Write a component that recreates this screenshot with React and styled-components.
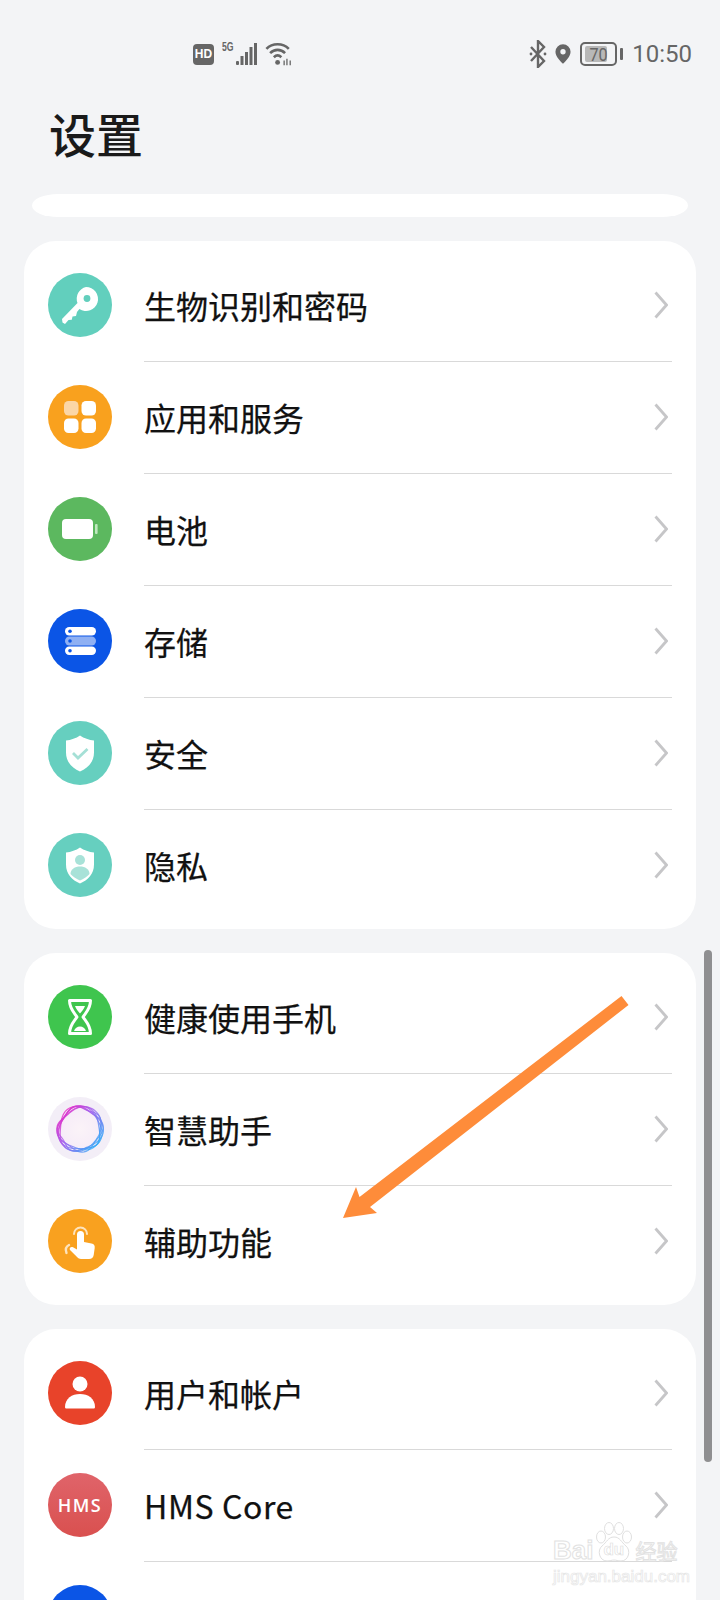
import React from 'react';
import styled, { createGlobalStyle } from 'styled-components';

const GlobalStyle = createGlobalStyle`
  html, body { margin: 0; padding: 0; background: #f3f4f6; }
  body { font-family: "Noto Sans CJK SC", "Noto Sans", sans-serif; }
`;

const Page = styled.div`
  position: relative;
  width: 720px;
  height: 1600px;
  overflow: hidden;
  background: #f3f4f6;
  color: #1a1a1a;
`;

const StatusBar = styled.div`
  display: flex;
  align-items: center;
  justify-content: space-between;
  height: 28px;
  padding: 40px 28px 0 193px;
  color: #666;
`;

const StatusGroup = styled.div`
  display: flex;
  align-items: center;
  gap: 8px;
  & svg { display: block; flex: none; }
`;

const HdBadge = styled.span`
  display: flex;
  align-items: center;
  justify-content: center;
  width: 21px;
  height: 21px;
  border-radius: 4px;
  background: #666;
  color: #fff;
  font: 700 12px/1 "Liberation Sans", sans-serif;
`;

const NetLabel = styled.span`
  align-self: flex-start;
  width: 13px;
  margin-right: -7px;
  font: 700 12px/12px "Liberation Sans", sans-serif;
  transform: scaleX(0.72);
  transform-origin: left top;
  white-space: nowrap;
`;

const BatteryCase = styled.div`
  position: relative;
  box-sizing: border-box;
  width: 37px;
  height: 24px;
  margin-left: 1px;
  border: 2px solid #666;
  border-radius: 5px;
  &::after {
    content: '';
    position: absolute;
    right: -8px;
    top: 4px;
    width: 3px;
    height: 12px;
    border-radius: 1px;
    background: #666;
  }
`;

const BatteryFill = styled.div`
  position: absolute;
  left: 3px;
  top: 2px;
  bottom: 2px;
  width: 22px;
  border-radius: 2px;
  background: #b8b8b8;
`;

const BatteryLabel = styled.span`
  position: absolute;
  inset: 0;
  display: flex;
  align-items: center;
  justify-content: center;
  font: 400 19px/1 Roboto, sans-serif;
  transform: scaleX(0.85);
`;

const Clock = styled.span`
  margin-left: 7px;
  font: 400 24px/28px Roboto, sans-serif;
`;

const Title = styled.h1`
  margin: 33px 0 0 49px;
  font-size: 47px;
  line-height: 64px;
  font-weight: 500;
  color: #1a1a1a;
`;

const ClippedCard = styled.div`
  height: 23px;
  margin: 29px 32px 24px;
  background: #fff;
  border-radius: 26px / 50%;
`;

const Cards = styled.div`
  display: flex;
  flex-direction: column;
  gap: 24px;
  padding: 0 24px;
`;

const Card = styled.div`
  padding: 8px 0;
  background: #fff;
  border-radius: 32px;
`;

const Row = styled.div`
  position: relative;
  display: flex;
  align-items: center;
  height: 112px;
  padding: 0 28px 0 24px;
  &:not(:last-child)::after {
    content: '';
    position: absolute;
    left: 120px;
    right: 24px;
    bottom: -1px;
    height: 1px;
    background: #d9d9d9;
  }
`;

const IconCircle = styled.div`
  display: flex;
  align-items: center;
  justify-content: center;
  flex: none;
  width: 64px;
  height: 64px;
  border-radius: 50%;
  background: ${(p) => p.$bg};
  & svg { display: block; }
`;

const HmsText = styled.span`
  color: #fff;
  font: 600 18px/1 "Open Sans", sans-serif;
  letter-spacing: 1.500px;
`;

const Label = styled.span`
  flex: 1;
  margin-left: 32px;
  font-size: 32px;
  line-height: 44px;
  font-weight: 400;
  color: #111;
  -webkit-text-stroke: 0.25px #111;
  letter-spacing: ${(p) => (p.$latin ? '0.6px' : '0')};
`;

const Scrollbar = styled.div`
  position: absolute;
  left: 704px;
  top: 950px;
  width: 8px;
  height: 512px;
  border-radius: 4px;
  background: #8f8f91;
`;

const ArrowLayer = styled.svg`
  position: absolute;
  left: 0;
  top: 0;
  pointer-events: none;
`;

const Watermark = styled.div`
  position: absolute;
  left: 553px;
  top: 1522px;
  width: 130px;
  pointer-events: none;
  color: #fff;
  -webkit-text-stroke: 1px #e2e2e2;
`;

const WatermarkBrand = styled.div`
  display: flex;
  align-items: flex-end;
  height: 40px;
  white-space: nowrap;
`;

const WatermarkLatin = styled.span`
  font: 700 26px/24px "Liberation Sans", sans-serif;
`;

const WatermarkCn = styled.span`
  font: 400 21px/24px "Noto Sans CJK SC", sans-serif;
`;

const WatermarkPaw = styled.div`
  position: relative;
  width: 42px;
  height: 40px;
`;

const WatermarkDu = styled.span`
  position: absolute;
  left: 10px;
  top: 19px;
  font: 700 17px/18px "Liberation Sans", sans-serif;
  -webkit-text-stroke: 0.6px #dcdcdc;
`;

const WatermarkUrl = styled.div`
  margin-top: 5px;
  font: 400 17px/20px "Liberation Sans", sans-serif;
  -webkit-text-stroke: 0.7px #e6e6e6;
  white-space: nowrap;
`;

const Chevron = () => (
  <svg width="14" height="28" viewBox="0 0 14 28" fill="none">
    <path d="M1.500 1.500 L12.500 14 L1.500 26.500" stroke="#c6c6c8" strokeWidth="2.800" />
  </svg>
);

const KeyGlyph = () => (
  <svg width="64" height="64" viewBox="0 0 64 64">
    <path fill="#fff" d="M38 14a12 12 0 1 1-6.600 22L29 39l-1 4-3.500.5-.7 3.200-3.300.3L17 51l-2.500-1.500-.5-3.500 15.500-16A12 12 0 0 1 38 14z" />
    <circle cx="39" cy="25.500" r="3.400" fill="#62cfbd" />
  </svg>
);

const AppsGlyph = () => (
  <svg width="64" height="64" viewBox="0 0 64 64">
    <rect x="16" y="16" width="14.500" height="14.500" rx="4.500" fill="#fbd6a6" />
    <rect x="33.500" y="16" width="14.500" height="14.500" rx="4.500" fill="#fff" />
    <rect x="16" y="33.500" width="14.500" height="14.500" rx="4.500" fill="#fff" />
    <rect x="33.500" y="33.500" width="14.500" height="14.500" rx="4.500" fill="#fff" />
  </svg>
);

const BatteryGlyph = () => (
  <svg width="64" height="64" viewBox="0 0 64 64">
    <rect x="14" y="22" width="31" height="20" rx="4" fill="#fff" />
    <rect x="47" y="27" width="2.600" height="10" rx="1" fill="#bfe8bf" />
  </svg>
);

const StorageGlyph = () => (
  <svg width="64" height="64" viewBox="0 0 64 64">
    <rect x="17" y="18" width="31" height="8.500" rx="4.200" fill="#fff" />
    <rect x="17" y="27.500" width="31" height="9" rx="4.500" fill="#8fb0f3" />
    <rect x="17" y="37.500" width="31" height="8.500" rx="4.200" fill="#fff" />
    <circle cx="22" cy="22.200" r="1.800" fill="#0b55e6" />
    <circle cx="22" cy="32" r="1.800" fill="#0b55e6" />
    <circle cx="22" cy="41.800" r="1.800" fill="#0b55e6" />
  </svg>
);

const shieldPath = 'M32 14.500c4 2.800 9 4.500 14 5v12c0 9.500-6 15.500-14 19-8-3.500-14-9.500-14-19v-12c5-.5 10-2.200 14-5z';

const ShieldCheckGlyph = () => (
  <svg width="64" height="64" viewBox="0 0 64 64">
    <path fill="#fff" d={shieldPath} />
    <path d="M25 32l5 5 9.500-9" fill="none" stroke="#a5e0d6" strokeWidth="2.800" />
  </svg>
);

const ShieldPersonGlyph = () => (
  <svg width="64" height="64" viewBox="0 0 64 64">
    <path fill="#fff" d={shieldPath} />
    <circle cx="32" cy="27" r="5" fill="#a8e2d8" />
    <path d="M22.500 41c0-5 4.500-7.500 9.500-7.500s9.500 2.500 9.500 7.500c-2.500 3-6 5-9.500 6.500-3.500-1.500-7-3.500-9.500-6.500z" fill="#a8e2d8" />
  </svg>
);

const HourglassGlyph = () => (
  <svg width="64" height="64" viewBox="0 0 64 64" fill="none">
    <path d="M21.500 15.500h21c0 8-4.500 12-7.500 16.500 3 4.500 7.500 8.500 7.500 16.500h-21c0-8 4.500-12 7.500-16.500-3-4.500-7.500-8.500-7.500-16.500z" stroke="#fff" strokeWidth="3" strokeLinejoin="round" />
    <path d="M27 21h10c-1 3-3 5-5 7.500-2-2.500-4-4.500-5-7.500z" fill="#fff" />
    <path d="M26 46c1-3 3.200-4.500 6-4.500s5 1.500 6 4.500z" fill="#fff" />
  </svg>
);

const ringPath = (amp, lobes, phase, radius) => {
  const pts = [];
  for (let i = 0; i < 72; i++) {
    const a = (i / 72) * Math.PI * 2;
    const r = radius + amp * Math.sin(lobes * a + phase);
    pts.push(`${(32 + r * Math.cos(a)).toFixed(2)} ${(32 + r * Math.sin(a)).toFixed(2)}`);
  }
  return `M${pts.join('L')}Z`;
};

const rings = [
  [1.800, 3, 0, 21.500],
  [2, 3, 1.300, 21.500],
  [1.800, 4, 2.200, 21.500],
  [2.200, 2, 3.400, 21.500],
  [1.600, 5, 4.400, 21.500],
  [2, 3, 5.200, 21],
];

const AssistantGlyph = () => (
  <svg width="64" height="64" viewBox="0 0 64 64" fill="none">
    <defs>
      <linearGradient id="ring" x1="0.100" y1="0.150" x2="0.900" y2="0.850">
        <stop offset="0" stopColor="#e52fc8" />
        <stop offset="0.450" stopColor="#a060ee" />
        <stop offset="1" stopColor="#35a8f7" />
      </linearGradient>
      <radialGradient id="ringFill" cx="0.500" cy="0.500" r="0.500">
        <stop offset="0" stopColor="#fbf3f8" />
        <stop offset="1" stopColor="#f6ecf8" />
      </radialGradient>
    </defs>
    <circle cx="32" cy="32" r="21" fill="url(#ringFill)" />
    {rings.map(([amp, lobes, phase, radius]) => (
      <path key={phase} d={ringPath(amp, lobes, phase, radius)} stroke="url(#ring)" strokeWidth="1.200" opacity="0.800" />
    ))}
  </svg>
);

const TouchGlyph = () => (
  <svg width="64" height="64" viewBox="0 0 64 64" fill="none">
    <path d="M26 25a6.500 6.500 0 1 1 13 0" stroke="#fde3bd" strokeWidth="2" strokeLinecap="round" />
    <path d="M21 36c-3 1.500-4 4-2.500 8" stroke="#fde3bd" strokeWidth="2.400" strokeLinecap="round" />
    <path fill="#fff" d="M29 25.500a3.500 3.500 0 0 1 7 0V33l7.500 1.500c2.500.5 3.500 2 3.200 4.500l-1 7c-.4 2.500-2 4-4.700 4H33c-1.500 0-2.700-.6-3.700-1.700L22 41c-1.200-1.500 .8-4 3-2.800l4 2.300z" />
  </svg>
);

const UserGlyph = () => (
  <svg width="64" height="64" viewBox="0 0 64 64">
    <circle cx="32" cy="23" r="7.500" fill="#fff" />
    <path fill="#fff" d="M17 46c0-8.500 7-13 15-13s15 4.500 15 13c0 1-.7 1.500-1.500 1.500h-27c-.8 0-1.500-.5-1.500-1.500z" />
  </svg>
);

const BlueGlyph = () => (
  <svg width="64" height="64" viewBox="0 0 64 64">
    <circle cx="32" cy="24" r="8" fill="#fff" opacity="0.850" />
  </svg>
);

const sections = [
  [
    { label: '生物识别和密码', bg: '#62cfbd', glyph: <KeyGlyph /> },
    { label: '应用和服务', bg: '#f9a11e', glyph: <AppsGlyph /> },
    { label: '电池', bg: '#5cb85f', glyph: <BatteryGlyph /> },
    { label: '存储', bg: '#0b55e6', glyph: <StorageGlyph /> },
    { label: '安全', bg: '#66cfbf', glyph: <ShieldCheckGlyph /> },
    { label: '隐私', bg: '#66cfbf', glyph: <ShieldPersonGlyph /> },
  ],
  [
    { label: '健康使用手机', bg: '#3fc54e', glyph: <HourglassGlyph /> },
    { label: '智慧助手', bg: '#f3eef7', glyph: <AssistantGlyph /> },
    { label: '辅助功能', bg: '#f9a11f', glyph: <TouchGlyph /> },
  ],
  [
    { label: '用户和帐户', bg: '#e8432a', glyph: <UserGlyph /> },
    { label: 'HMS Core', latin: true, bg: 'linear-gradient(180deg, #e0646a, #d9504f)', glyph: <HmsText>HMS</HmsText> },
    { label: '', bg: '#0b55e6', glyph: <BlueGlyph /> },
  ],
];

export default function App() {
  return (
    <Page>
      <GlobalStyle />
      <StatusBar>
        <StatusGroup>
          <HdBadge>HD</HdBadge>
          <NetLabel>5G</NetLabel>
          <svg width="21" height="24" viewBox="0 0 21 24" fill="#666">
            <rect x="0" y="19" width="3" height="4" rx="1" />
            <rect x="4.500" y="14" width="3" height="9" />
            <rect x="9" y="10" width="3" height="13" />
            <rect x="13.500" y="5" width="3" height="18" />
            <rect x="18" y="1" width="3" height="22" />
          </svg>
          <svg width="28" height="26" viewBox="0 0 30 26" fill="none" stroke="#666" strokeWidth="2.800">
            <path d="M1.500 7.500C8 1 19 1 25.500 7.500" />
            <path d="M5.500 12c4.500-4.500 11.500-4.500 16 0" />
            <path d="M9.500 16.500c2.500-2.500 5.500-2.500 8 0" />
            <circle cx="13.500" cy="22" r="2.600" fill="#666" stroke="none" />
            <path d="M20.500 20v5M23.500 18v7M27 20v5" strokeWidth="1.400" />
          </svg>
        </StatusGroup>
        <StatusGroup>
          <svg width="18" height="28" viewBox="0 0 18 28" fill="none" stroke="#666" strokeWidth="2.400">
            <path d="M2 7l13 14-6 6V1l6 6L2 21" />
            <circle cx="2" cy="14" r="1.400" fill="#666" stroke="none" />
            <circle cx="16" cy="14" r="1.400" fill="#666" stroke="none" />
          </svg>
          <svg width="16" height="24" viewBox="0 0 18 24">
            <path fill="#666" fillRule="evenodd" d="M9 1a8.500 8.500 0 0 1 8.500 8.500C17.500 15 12 20 9 23 6 20 .5 15 .5 9.500A8.500 8.500 0 0 1 9 1zm0 5.500a3 3 0 1 0 0 6 3 3 0 0 0 0-6z" />
          </svg>
          <BatteryCase>
            <BatteryFill />
            <BatteryLabel>70</BatteryLabel>
          </BatteryCase>
          <Clock>10:50</Clock>
        </StatusGroup>
      </StatusBar>
      <Title>设置</Title>
      <ClippedCard />
      <Cards>
        {sections.map((rows, i) => (
          <Card key={i}>
            {rows.map((row, j) => (
              <Row key={j}>
                <IconCircle $bg={row.bg}>{row.glyph}</IconCircle>
                {row.label && <Label $latin={row.latin}>{row.label}</Label>}
                {row.label && <Chevron />}
              </Row>
            ))}
          </Card>
        ))}
      </Cards>
      <Scrollbar />
      <ArrowLayer width="720" height="1600" viewBox="0 0 720 1600">
        <path d="M621.500 996 L628.500 1005 L370 1207 L377 1213 L343 1218 L356 1187 L359.500 1197 Z" fill="#fe8c3a" />
      </ArrowLayer>
      <Watermark>
        <WatermarkBrand>
          <WatermarkLatin>Bai</WatermarkLatin>
          <WatermarkPaw>
            <svg width="42" height="40" viewBox="0 0 42 40" fill="#fff" stroke="#e0e0e0" strokeWidth="1">
              <ellipse cx="8" cy="15" rx="4.500" ry="6" />
              <ellipse cx="16" cy="6.500" rx="4.500" ry="6" />
              <ellipse cx="26" cy="6.500" rx="4.500" ry="6" />
              <ellipse cx="34" cy="15" rx="4.500" ry="6" />
              <path d="M21 15c6 0 7 5 12 9 5 4 3 15-5 15-3 0-5-1-7-1s-4 1-7 1c-8 0-10-11-5-15s6-9 12-9z" />
            </svg>
            <WatermarkDu>du</WatermarkDu>
          </WatermarkPaw>
          <WatermarkCn>经验</WatermarkCn>
        </WatermarkBrand>
        <WatermarkUrl>jingyan.baidu.com</WatermarkUrl>
      </Watermark>
    </Page>
  );
}
